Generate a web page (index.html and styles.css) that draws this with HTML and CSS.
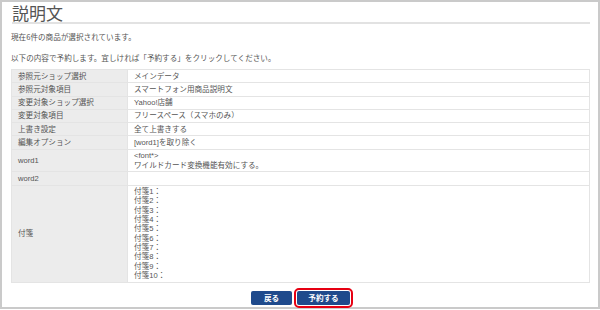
FILE: index.html
```html
<!DOCTYPE html>
<html lang="ja">
<head>
  <meta charset="UTF-8" />
  <title>説明文</title>
  <link rel="stylesheet" href="styles.css">
</head>
<body>
  <div class="frame">
    <h1 class="title">説明文</h1>
    <p class="note">現在6件の商品が選択されています。</p>
    <p class="note">以下の内容で予約します。宜しければ「予約する」をクリックしてください。</p>

    <table class="confirm">
      <tr><th>参照元ショップ選択</th><td>メインデータ</td></tr>
      <tr><th>参照元対象項目</th><td>スマートフォン用商品説明文</td></tr>
      <tr><th>変更対象ショップ選択</th><td>Yahoo!店舗</td></tr>
      <tr><th>変更対象項目</th><td>フリースペース（スマホのみ）</td></tr>
      <tr><th>上書き設定</th><td>全て上書きする</td></tr>
      <tr><th>編集オプション</th><td>[word1]を取り除く</td></tr>
      <tr><th>word1</th><td>&lt;font*&gt;<br>ワイルドカード変換機能有効にする。</td></tr>
      <tr><th>word2</th><td></td></tr>
      <tr>
        <th>付箋</th>
        <td>付箋1：<br>付箋2：<br>付箋3：<br>付箋4：<br>付箋5：<br>付箋6：<br>付箋7：<br>付箋8：<br>付箋9：<br>付箋10：</td>
      </tr>
    </table>

    <div class="actions">
      <button class="btn">戻る</button>
      <button class="btn marked">予約する</button>
    </div>
  </div>
</body>
</html>
```

FILE: styles.css
```css
* {
  box-sizing: border-box;
}
body {
  margin: 0;
  background: #fff;
  font-family: "Noto Sans CJK JP", "Liberation Sans", sans-serif;
  color: #555;
}
.frame {
  width: 600px;
  height: 309px;
  border: 2px solid #cacaca;
  padding: 2px 8px 0 9px;
}
.title {
  margin: 0 0 0 1px;
  font-size: 17px;
  font-weight: normal;
  line-height: 18px;
  color: #555;
  border-bottom: 2px solid #e2e2e2;
}
.note {
  margin: 0;
  font-size: 7.6px;
  line-height: 10px;
  padding-top: 8px;
  padding-bottom: 3px;
}
.confirm {
  width: 100%;
  margin-top: 3px;
  border-collapse: collapse;
  font-family: "Liberation Sans", "Noto Sans CJK JP", sans-serif;
  font-size: 7.6px;
  line-height: 9.3px;
}
.confirm th,
.confirm td {
  border: 1px solid #e4e4e4;
  padding: 1.5px 6px;
  text-align: left;
  font-weight: normal;
  vertical-align: middle;
}
.confirm th {
  width: 116px;
  background: #ececec;
}
.confirm td {
  background: #fff;
}
.actions {
  display: flex;
  justify-content: center;
  gap: 4px;
  margin-top: 8px;
}
.btn {
  height: 14px;
  padding: 0;
  width: 41px;
  border: none;
  border-radius: 2px;
  background: #1f4a8c;
  color: #fff;
  font-family: inherit;
  font-size: 7.6px;
  font-weight: bold;
  line-height: 14px;
}
.marked {
  width: 53px;
  margin-left: 1px;
  outline: 2px solid #e60012;
  outline-offset: 1px;
}
```
